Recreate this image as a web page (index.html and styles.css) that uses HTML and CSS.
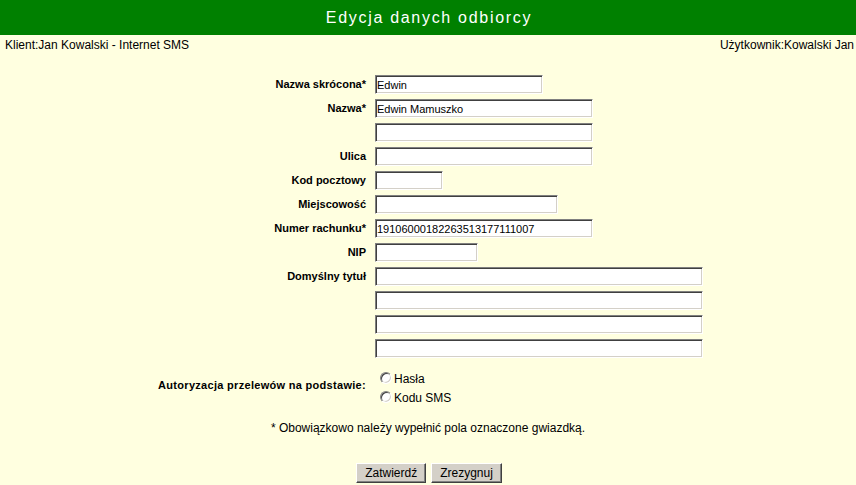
FILE: index.html
```html
<!DOCTYPE html>
<html lang="pl">
<head>
<meta charset="utf-8">
<title>Edycja danych odbiorcy</title>
<link rel="stylesheet" href="styles.css">
</head>
<body>
<div class="header"><h1 class="title">Edycja danych odbiorcy</h1></div>
<div class="info">
  <span>Klient:Jan Kowalski - Internet SMS</span>
  <span>Użytkownik:Kowalski Jan</span>
</div>
<form class="form">
  <div class="grid">
    <label class="lbl">Nazwa skrócona*</label>
    <div class="field"><input class="txt w168" type="text" value="Edwin"></div>

    <label class="lbl">Nazwa*</label>
    <div class="field"><input class="txt w218" type="text" value="Edwin Mamuszko"></div>

    <span class="lbl"></span>
    <div class="field"><input class="txt w218" type="text" value=""></div>

    <label class="lbl">Ulica</label>
    <div class="field"><input class="txt w218" type="text" value=""></div>

    <label class="lbl">Kod pocztowy</label>
    <div class="field"><input class="txt w68" type="text" value=""></div>

    <label class="lbl">Miejscowość</label>
    <div class="field"><input class="txt w183" type="text" value=""></div>

    <label class="lbl">Numer rachunku*</label>
    <div class="field"><input class="txt w218" type="text" value="19106000182263513177111007"></div>

    <label class="lbl">NIP</label>
    <div class="field"><input class="txt w103" type="text" value=""></div>

    <label class="lbl lbl-top">Domyślny tytuł</label>
    <div class="field stack">
      <input class="txt w328" type="text" value="">
      <input class="txt w328" type="text" value="">
      <input class="txt w328" type="text" value="">
      <input class="txt w328" type="text" value="">
    </div>

    <span class="lbl lbl-auth">Autoryzacja przelewów na podstawie:</span>
    <div class="field radios">
      <label class="radio-line"><input class="radio" type="radio" name="auth">Hasła</label>
      <label class="radio-line"><input class="radio" type="radio" name="auth">Kodu SMS</label>
    </div>
  </div>
  <p class="note">* Obowiązkowo należy wypełnić pola oznaczone gwiazdką.</p>
  <div class="buttons">
    <button class="btn" type="button">Zatwierdź</button>
    <button class="btn" type="button">Zrezygnuj</button>
  </div>
</form>
</body>
</html>
```
FILE: styles.css
```css
html, body {
  margin: 0;
  padding: 0;
  background: #ffffe0;
  font-family: "Liberation Sans", Arial, sans-serif;
  color: #000;
}

.header {
  background: #008000;
  height: 35px;
  display: flex;
  justify-content: center;
}

.title {
  margin: 0 0 0 2px;
  font-size: 16px;
  font-weight: normal;
  line-height: 35px;
  color: #fff;
  letter-spacing: 1.7px;
}

.info {
  display: flex;
  justify-content: space-between;
  margin-top: 3px;
  padding: 0 2px 0 5px;
  font-size: 12px;
  line-height: 14px;
}

.form {
  margin: 0;
}

.grid {
  display: grid;
  grid-template-columns: 215px 330px;
  column-gap: 9px;
  row-gap: 5px;
  justify-content: center;
  margin-top: 23px;
}

.lbl {
  text-align: right;
  font-size: 11px;
  font-weight: bold;
  line-height: 19px;
  align-self: center;
}

.lbl-top {
  align-self: start;
}

.lbl-auth {
  letter-spacing: 0.3px;
}

.field {
  display: flex;
}

.stack {
  flex-direction: column;
  gap: 5px;
}

.txt {
  box-sizing: border-box;
  height: 19px;
  margin: 0;
  padding: 0 1px;
  font-family: "Liberation Sans", Arial, sans-serif;
  font-size: 11px;
  color: #000;
  background: #fff;
  border: 1px solid;
  border-color: #808080 #ffffff #ffffff #808080;
  box-shadow: inset 1px 1px 0 #404040, inset -1px -1px 0 #d4d0c8;
  outline: none;
}

.w68 { width: 68px; }
.w103 { width: 103px; }
.w168 { width: 168px; }
.w183 { width: 183px; }
.w218 { width: 218px; }
.w328 { width: 328px; }

.radios {
  flex-direction: column;
  padding-top: 6px;
}

.radio-line {
  display: flex;
  align-items: center;
  height: 19px;
  font-size: 12px;
}

.radio {
  appearance: none;
  -webkit-appearance: none;
  box-sizing: border-box;
  width: 12px;
  height: 12px;
  margin: 0 2px 0 5px;
  border-radius: 50%;
  background: #fff;
  border: 1px solid;
  border-color: #808080 #ffffff #ffffff #808080;
  box-shadow: inset 1px 1px 0 #404040, inset -1px -1px 0 #d4d0c8;
  position: relative;
  top: -1px;
}

.note {
  margin: 14px 0 0;
  text-align: center;
  font-size: 12px;
  line-height: 14px;
}

.buttons {
  display: flex;
  justify-content: center;
  gap: 5px;
  margin-top: 28px;
  padding-left: 2px;
}

.btn {
  box-sizing: border-box;
  height: 20px;
  padding: 0 8px;
  font-family: "Liberation Sans", Arial, sans-serif;
  font-size: 12px;
  color: #000;
  background: #d4d0c8;
  border: 1px solid;
  border-color: #ffffff #404040 #404040 #ffffff;
  box-shadow: inset -1px -1px 0 #808080;
  border-radius: 0;
}
```
